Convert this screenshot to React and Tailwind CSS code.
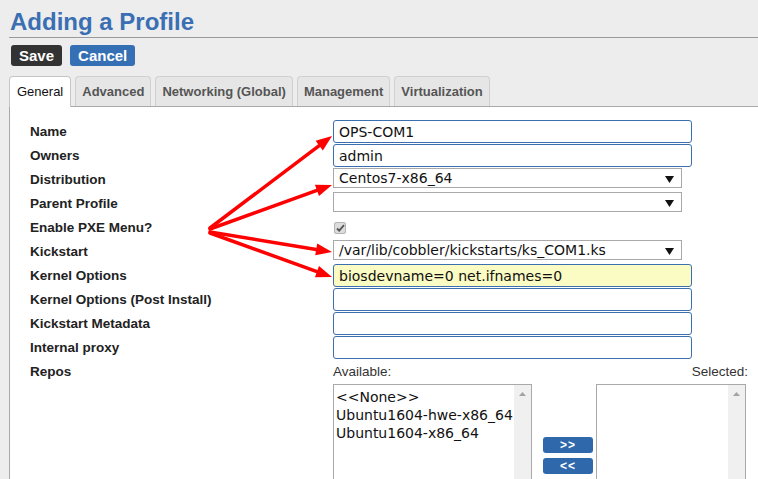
import React from 'react';

const rows = [
  { label: 'Name', kind: 'input', value: 'OPS-COM1' },
  { label: 'Owners', kind: 'input', value: 'admin' },
  { label: 'Distribution', kind: 'select', value: 'Centos7-x86_64' },
  { label: 'Parent Profile', kind: 'select', value: '' },
  { label: 'Enable PXE Menu?', kind: 'check' },
  { label: 'Kickstart', kind: 'select', value: '/var/lib/cobbler/kickstarts/ks_COM1.ks' },
  { label: 'Kernel Options', kind: 'input', value: 'biosdevname=0 net.ifnames=0', hi: true },
  { label: 'Kernel Options (Post Install)', kind: 'input', value: '' },
  { label: 'Kickstart Metadata', kind: 'input', value: '' },
  { label: 'Internal proxy', kind: 'input', value: '' },
];

const tabs = ['General', 'Advanced', 'Networking (Global)', 'Management', 'Virtualization'];

function Caret() {
  return (
    <svg width="9" height="7" viewBox="0 0 9 7" className="absolute right-[7px] top-[7px]">
      <path d="M0 0h9L4.5 7z" fill="#111" />
    </svg>
  );
}

function Field({ row }) {
  if (row.kind === 'check') {
    return (
      <div className="flex h-[24px] items-center pl-[1px]">
        <div className="flex h-[12px] w-[12px] items-center justify-center rounded-[2px] border border-[#b5b5b5] bg-[#dcdcdc]">
          <svg width="9" height="8" viewBox="0 0 9 8">
            <path d="M1 4.5l2.2 2.2L8 1.2" stroke="#555" strokeWidth="1.8" fill="none" />
          </svg>
        </div>
      </div>
    );
  }
  if (row.kind === 'select') {
    return (
      <div className="h-[24px] pb-[4px]">
        <div className="relative flex h-[20px] w-[349px] items-center border border-[#a9a9a9] bg-white pl-[5px] font-['DejaVu_Sans',sans-serif] text-[14px] leading-none text-[#111]">
          {row.value}
          <Caret />
        </div>
      </div>
    );
  }
  return (
    <div className="h-[24px] pb-[1px]">
      <div
        className={`flex h-[23px] w-[359px] items-center rounded-[3px] border border-[#3a6fb0] pl-[5px] font-['DejaVu_Sans',sans-serif] text-[14px] leading-none text-[#111] ${row.hi ? 'bg-[#fbfbc4]' : 'bg-white'}`}
      >
        {row.value}
      </div>
    </div>
  );
}

function ListBox({ width, items }) {
  return (
    <div className={`flex h-[100px] border border-[#a9a9a9] bg-white ${width}`}>
      <div className="flex-1 pl-[2px] pt-[3px] font-['DejaVu_Sans',sans-serif] text-[14px] leading-[18px] text-[#111]">
        {items.map((it) => (
          <div key={it} className="whitespace-nowrap">{it}</div>
        ))}
      </div>
      <div className="flex w-[17px] justify-center bg-[#f0f0f0] pt-[7px]">
        <svg width="7" height="4" viewBox="0 0 7 4">
          <path d="M0 4L3.5 0L7 4z" fill="#a3a3a3" />
        </svg>
      </div>
    </div>
  );
}

function Arrows() {
  const lines = [
    [210, 228, 332, 136],
    [210, 229, 332, 185],
    [210, 232, 332, 252],
    [210, 233, 332, 277],
  ];
  return (
    <svg className="pointer-events-none absolute inset-0" width="758" height="479">
      {lines.map(([x1, y1, x2, y2], i) => {
        const a = Math.atan2(y2 - y1, x2 - x1);
        const len = 16;
        const w = 6;
        const bx = x2 - len * Math.cos(a);
        const by = y2 - len * Math.sin(a);
        const px = -Math.sin(a) * w;
        const py = Math.cos(a) * w;
        return (
          <g key={i}>
            <line x1={x1} y1={y1} x2={bx} y2={by} stroke="#ff0000" strokeWidth="3.5" strokeLinecap="round" />
            <polygon points={`${x2},${y2} ${bx + px},${by + py} ${bx - px},${by - py}`} fill="#ff0000" />
          </g>
        );
      })}
    </svg>
  );
}

export default function App() {
  return (
    <div className="relative h-[479px] w-[758px] overflow-hidden bg-[#ededed] font-['Liberation_Sans',Arial,sans-serif]">
      <div className="flex h-full flex-col pl-[9px]">
        <h1 className="h-[38px] shrink-0 border-b-[1.5px] border-[#9a9a9a] pl-[1px] pt-[8px] text-[24px] font-bold leading-[28px] text-[#3a6fb3]">
          Adding a Profile
        </h1>
        <div className="flex shrink-0 gap-[8px] pl-[2px] pt-[7px]">
          <button className="h-[21px] rounded-[3px] bg-[#333] px-[8px] text-[15px] font-bold leading-none text-white">Save</button>
          <button className="h-[21px] rounded-[3px] bg-[#3570b4] px-[8px] text-[15px] font-bold leading-none text-white">Cancel</button>
        </div>
        <div className="mt-[10px] flex shrink-0 gap-[4px]">
          {tabs.map((t, i) =>
            i === 0 ? (
              <div key={t} className="relative z-10 -mb-px flex h-[31px] items-center rounded-t-[4px] border border-b-0 border-[#c5c5c5] bg-white px-[7px] text-[13px] text-[#111]">
                {t}
              </div>
            ) : (
              <div key={t} className="flex h-[30px] items-center rounded-t-[4px] border border-b-0 border-[#d0d0d0] bg-[#e6e6e6] px-[6px] text-[13px] font-bold text-[#555]">
                {t}
              </div>
            )
          )}
        </div>
        <div className="flex-1 border-l border-t border-[#a9a9a9] bg-white pl-[20px] pt-[13px]">
          <div className="grid grid-cols-[303px_1fr]">
            {rows.map((r) => (
              <React.Fragment key={r.label}>
                <div className="flex h-[24px] items-center text-[13.5px] font-bold text-[#222]">{r.label}</div>
                <Field row={r} />
              </React.Fragment>
            ))}
            <div className="flex h-[24px] items-center text-[13.5px] font-bold text-[#222]">Repos</div>
            <div className="flex w-[415px] items-start">
              <div className="flex flex-col">
                <div className="flex h-[24px] items-center text-[13.5px] text-[#333]">Available:</div>
                <ListBox width="w-[199px]" items={['<<None>>', 'Ubuntu1604-hwe-x86_64', 'Ubuntu1604-x86_64']} />
              </div>
              <div className="ml-[11px] mt-[77px] flex flex-col gap-[5px]">
                <button className="h-[16px] w-[50px] rounded-[3px] bg-[#3068ac] text-[12px] font-bold leading-none tracking-[1px] text-white">&gt;&gt;</button>
                <button className="h-[16px] w-[50px] rounded-[3px] bg-[#3068ac] text-[12px] font-bold leading-none tracking-[1px] text-white">&lt;&lt;</button>
              </div>
              <div className="ml-[3px] flex flex-1 flex-col">
                <div className="flex h-[24px] items-center justify-end text-[13.5px] text-[#333]">Selected:</div>
                <ListBox width="w-[150px]" items={[]} />
              </div>
            </div>
          </div>
        </div>
      </div>
      <Arrows />
    </div>
  );
}
